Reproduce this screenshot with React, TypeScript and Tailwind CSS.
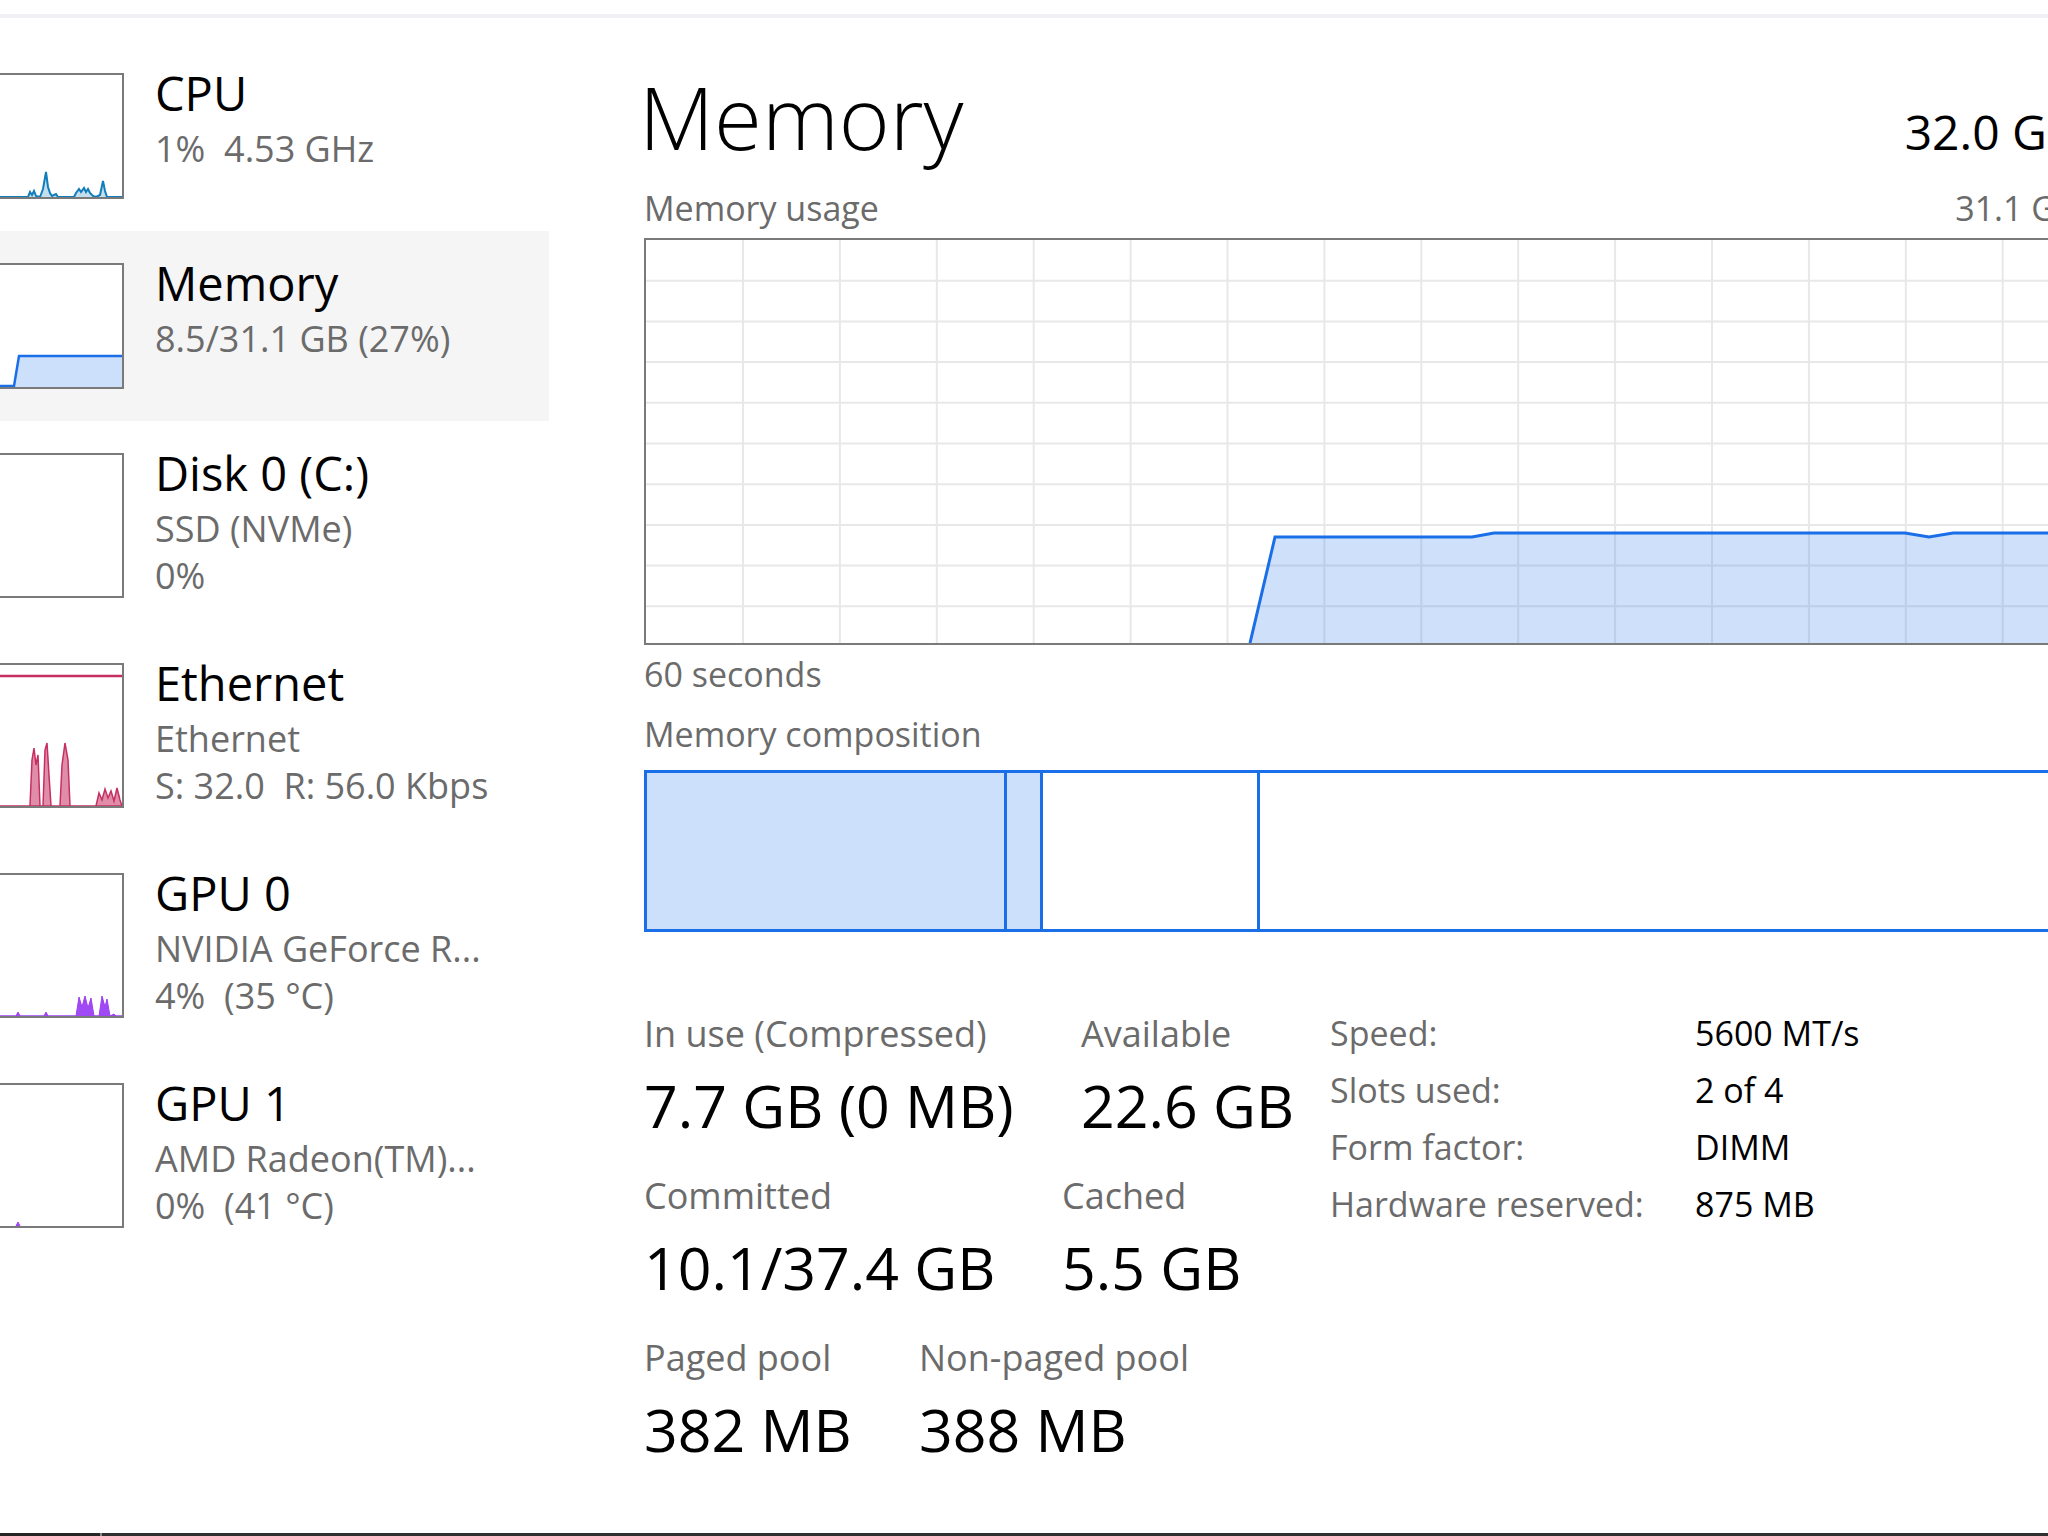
import type { ReactNode } from "react";

type Device = {
  name: string;
  lines: string[];
  graph: ReactNode;
  selected?: boolean;
};

const BLUE = "#1a6ee8";

// Sparkline drawn inside a sidebar thumbnail. Inner box is 156 wide.
function Spark({ h, children }: { h: number; children: ReactNode }) {
  return (
    <svg viewBox={`0 0 156 ${h}`} preserveAspectRatio="none" className="block h-full w-full">
      {children}
    </svg>
  );
}

const devices: Device[] = [
  {
    name: "CPU",
    lines: ["1%  4.53 GHz"],
    graph: (
      <Spark h={122}>
        <path
          d="M0,122 L62,122 L64,117 L66,120 L68,116 L70,121 L74,122 L77,114 L80,97 L82,112 L84,118 L86,121 L90,119 L92,122 L108,122 L110,118 L113,114 L115,117 L118,113 L120,117 L122,114 L124,118 L127,121 L130,122 L134,120 L137,106 L139,116 L141,122 L156,122"
          fill="rgba(17,125,187,0.25)"
          stroke="#117dbb"
          strokeWidth="2"
        />
      </Spark>
    ),
  },
  {
    name: "Memory",
    lines: ["8.5/31.1 GB (27%)"],
    selected: true,
    graph: (
      <Spark h={122}>
        <path d="M0,122 L48,122 L53,91 L156,91 L156,122 Z" fill="#cce0fb" />
        <path d="M0,121 L48,121 L53,91 L156,91" fill="none" stroke={BLUE} strokeWidth="2.5" />
      </Spark>
    ),
  },
  {
    name: "Disk 0 (C:)",
    lines: ["SSD (NVMe)", "0%"],
    graph: <Spark h={141}>{null}</Spark>,
  },
  {
    name: "Ethernet",
    lines: ["Ethernet", "S: 32.0  R: 56.0 Kbps"],
    graph: (
      <Spark h={141}>
        <line x1="0" y1="11" x2="156" y2="11" stroke="#c62f62" strokeWidth="2.5" />
        <path
          d="M0,141 L64,141 L66,95 L68,83 L70,100 L72,90 L74,141 L77,141 L79,85 L81,78 L83,110 L85,141 L94,141 L96,100 L99,78 L102,95 L104,141 L130,141 L133,128 L136,135 L139,124 L142,133 L145,126 L148,136 L151,123 L154,135 L156,141 Z"
          fill="rgba(198,47,98,0.55)"
          stroke="#c62f62"
          strokeWidth="1.5"
        />
      </Spark>
    ),
  },
  {
    name: "GPU 0",
    lines: ["NVIDIA GeForce R...", "4%  (35 °C)"],
    graph: (
      <Spark h={141}>
        <path
          d="M0,141 L50,141 L52,137 L54,141 L78,141 L80,137 L82,141 L110,141 L113,122 L116,132 L119,121 L122,133 L125,123 L128,141 L133,141 L136,121 L139,132 L141,124 L144,141 L148,139 L150,141 L156,141 Z"
          fill="#a04af5"
          stroke="#9b40f2"
          strokeWidth="1"
        />
      </Spark>
    ),
  },
  {
    name: "GPU 1",
    lines: ["AMD Radeon(TM)...", "0%  (41 °C)"],
    graph: (
      <Spark h={141}>
        <path d="M50,141 L52,137 L54,141 Z" fill="#a04af5" stroke="#9b40f2" strokeWidth="1" />
      </Spark>
    ),
  },
];

function DeviceRow({ d }: { d: Device }) {
  const tall = d.lines.length > 1;
  return (
    <div className={`flex items-start py-[32px] ${d.selected ? "bg-[#f5f5f5]" : ""}`}>
      <div
        className={`-ml-[36px] w-[160px] shrink-0 border-2 border-[#7a7a7a] bg-white ${
          tall ? "h-[145px]" : "h-[126px]"
        }`}
      >
        {d.graph}
      </div>
      <div className="whitespace-pre pl-[31px] pt-[2px]">
        <div className="text-[47px] leading-[36px] text-black">{d.name}</div>
        <div className="mt-[14px] text-[36px] leading-[47px] text-[#6b6b6b]">
          {d.lines.map((l) => (
            <div key={l}>{l}</div>
          ))}
        </div>
      </div>
    </div>
  );
}

// Usage history: 1430 x 403 inner box
function UsageGraph() {
  const cols = Array.from({ length: 14 }, (_, k) => 97 + k * 96.9);
  const rows = Array.from({ length: 9 }, (_, k) => 40.7 * (k + 1));
  const line =
    "M604,403 L629,297 L826,297 L848,293 L1259,293 L1283,297 L1307,293 L1430,293";
  return (
    <svg viewBox="0 0 1430 403" preserveAspectRatio="none" className="block h-full w-full">
      {cols.map((x) => (
        <line key={`c${x}`} x1={x} y1="0" x2={x} y2="403" stroke="#e8e8e8" strokeWidth="2" />
      ))}
      {rows.map((y) => (
        <line key={`r${y}`} x1="0" y1={y} x2="1430" y2={y} stroke="#e8e8e8" strokeWidth="2" />
      ))}
      <path d={`${line} L1430,403 Z`} fill="rgba(26,110,232,0.21)" />
      <path d={line} fill="none" stroke={BLUE} strokeWidth="3" />
    </svg>
  );
}

function Stat({ label, value, className = "" }: { label: string; value: string; className?: string }) {
  return (
    <div className={`whitespace-nowrap ${className}`}>
      <div className="text-[36px] leading-[53px] text-[#6b6b6b]">{label}</div>
      <div className="mt-[13px] text-[59px] leading-[64px] text-black">{value}</div>
    </div>
  );
}

const specs = [
  ["Speed:", "5600 MT/s"],
  ["Slots used:", "2 of 4"],
  ["Form factor:", "DIMM"],
  ["Hardware reserved:", "875 MB"],
];

export default function App() {
  return (
    <div className="flex h-[1536px] w-[2048px] flex-col overflow-hidden bg-white font-['Open_Sans',sans-serif]">
      <div className="h-[14px] shrink-0" />
      <div className="h-[4px] shrink-0 bg-[#eff1f4]" />

      <div className="flex min-h-0 flex-1">
        {/* device list */}
        <div className="w-[549px] shrink-0 pt-[23px]">
          {devices.map((d) => (
            <DeviceRow key={d.name} d={d} />
          ))}
        </div>

        {/* memory details */}
        <div className="ml-[95px] w-[1434px] shrink-0 pt-[48px]">
          <div className="flex items-baseline justify-between whitespace-nowrap">
            <div className="-ml-[5px] text-[87px] font-light leading-[100px] text-black">Memory</div>
            <div className="text-[48px] text-black">32.0 GB</div>
          </div>
          <div className="mt-[20px] flex justify-between text-[34px] leading-[40px] text-[#6b6b6b]">
            <span>Memory usage</span>
            <span>31.1 GB</span>
          </div>
          <div className="mt-[10px] h-[407px] border-2 border-[#7a7a7a]">
            <UsageGraph />
          </div>
          <div className="mt-[9px] text-[34px] leading-[40px] text-[#6b6b6b]">60 seconds</div>
          <div className="mt-[20px] text-[34px] leading-[40px] text-[#6b6b6b]">Memory composition</div>
          <div className="mt-[16px] flex h-[162px] border-[3px] border-[#1a6ee8]">
            <div className="w-[360px] border-r-[3px] border-[#1a6ee8] bg-[#cce0fb]" />
            <div className="w-[36px] border-r-[3px] border-[#1a6ee8] bg-[#cce0fb]" />
            <div className="w-[217px] border-r-[3px] border-[#1a6ee8]" />
            <div className="flex-1" />
          </div>

          <div className="mt-[75px] flex items-start">
            <div className="flex w-[686px] shrink-0 flex-col gap-[32px]">
              <div className="flex">
                <Stat label="In use (Compressed)" value="7.7 GB (0 MB)" className="w-[437px]" />
                <Stat label="Available" value="22.6 GB" />
              </div>
              <div className="flex">
                <Stat label="Committed" value="10.1/37.4 GB" className="w-[418px]" />
                <Stat label="Cached" value="5.5 GB" />
              </div>
              <div className="flex">
                <Stat label="Paged pool" value="382 MB" className="w-[275px]" />
                <Stat label="Non-paged pool" value="388 MB" />
              </div>
            </div>
            <div className="-mt-[2px] grid auto-rows-[57px] grid-cols-[365px_auto] content-start whitespace-nowrap text-[34px] leading-[57px]">
              {specs.map(([k, v]) => (
                <div key={k} className="contents">
                  <span className="text-[#6b6b6b]">{k}</span>
                  <span className="text-black">{v}</span>
                </div>
              ))}
            </div>
          </div>
        </div>
      </div>

      {/* window bottom edge */}
      <div className="flex h-[3px] shrink-0">
        <div className="w-[100px] bg-[#262626]" />
        <div className="w-[2px] bg-[#8a8a8a]" />
        <div className="flex-1 bg-[#303030]" />
      </div>
    </div>
  );
}
